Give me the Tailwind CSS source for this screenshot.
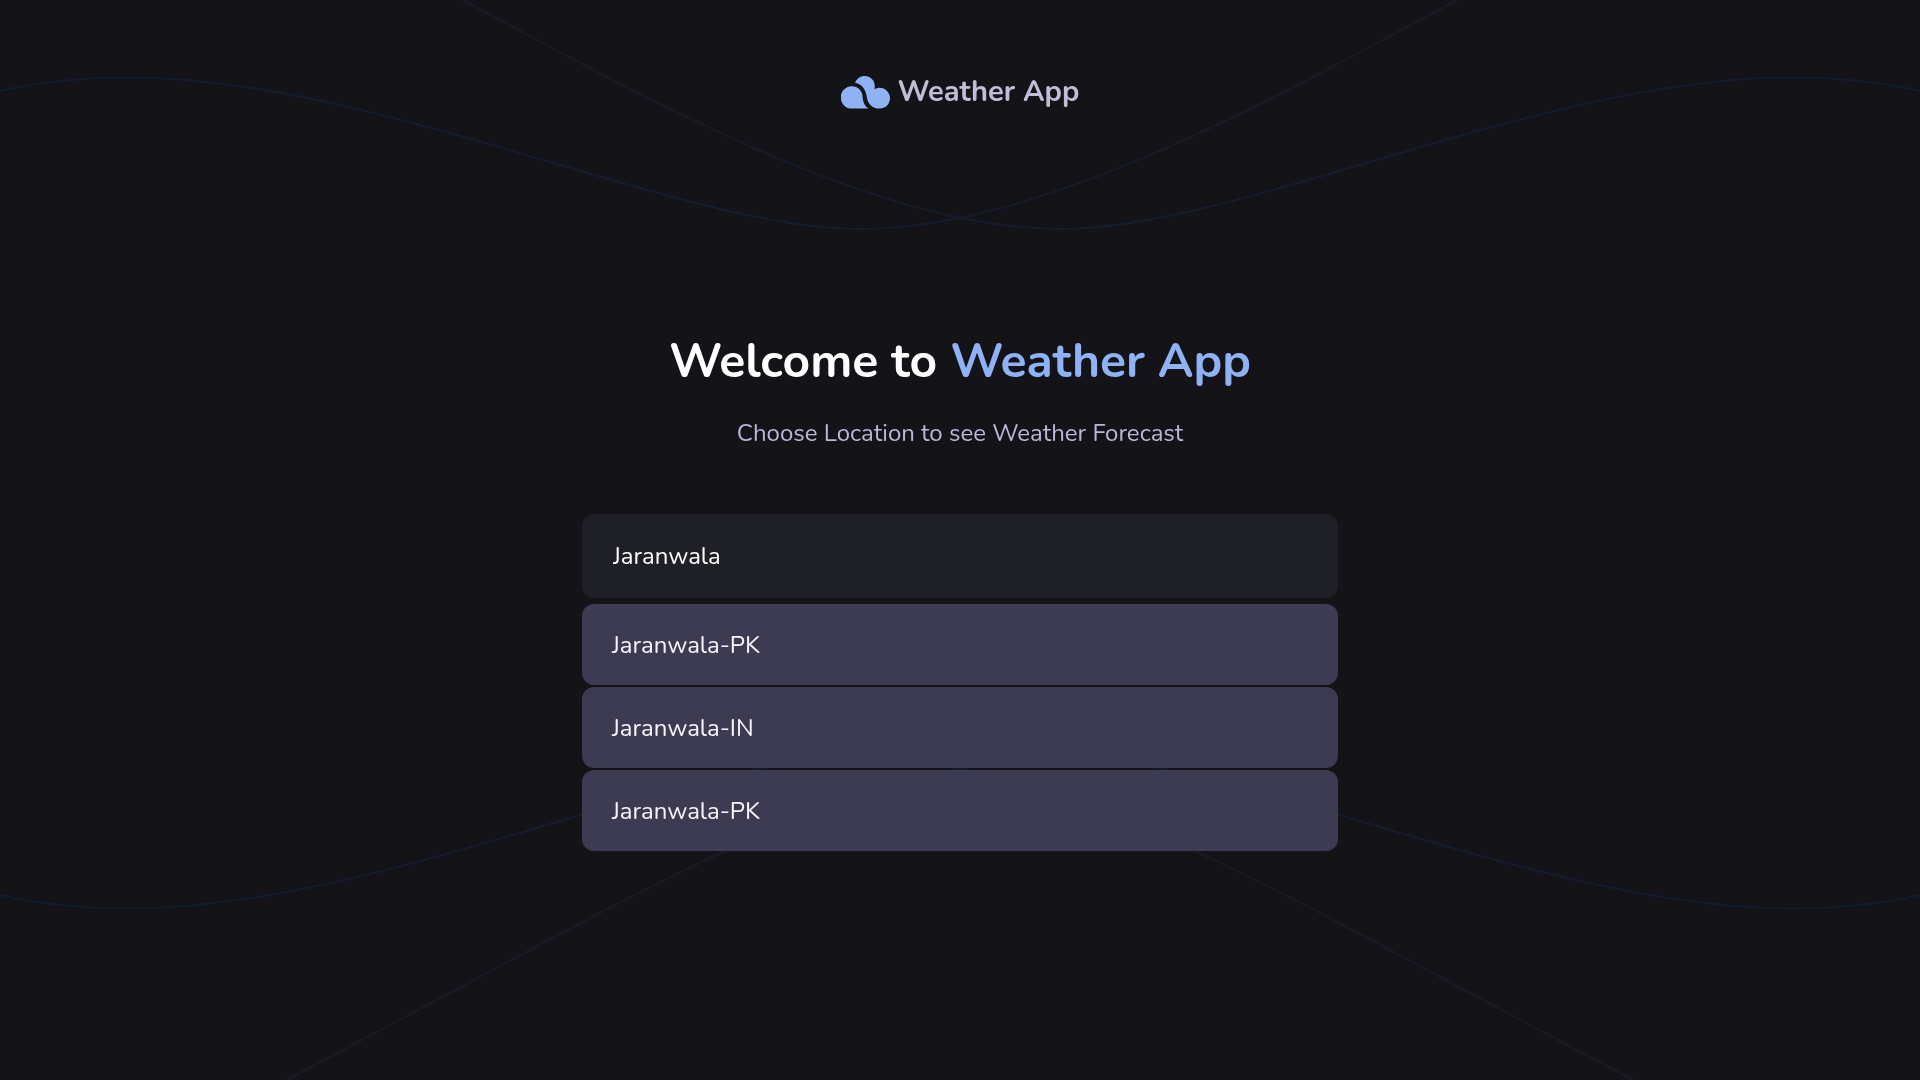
<!DOCTYPE html>
<html lang="en">
<head>
<meta charset="utf-8">
<meta name="viewport" content="width=device-width, initial-scale=1">
<title>Weather App</title>
<script src="https://cdn.jsdelivr.net/npm/@tailwindcss/browser@4"></script>
</head>
<body class="min-h-screen bg-[#131318] font-['Nunito','Lato',sans-serif] text-white">
<!-- Decorative waves: one curve, mirrored on both axes -->
<svg class="pointer-events-none fixed inset-0 -z-10 h-full w-full" viewBox="0 0 1920 1080" preserveAspectRatio="xMidYMid slice" fill="none" aria-hidden="true">
  <defs>
    <linearGradient id="fade" gradientUnits="userSpaceOnUse" x1="0" y1="0" x2="1640" y2="0">
      <stop offset="0" stop-color="#131c30"/>
      <stop offset="0.5" stop-color="#161d2d"/>
      <stop offset="1" stop-color="#191c26"/>
    </linearGradient>
    <path id="wave" stroke="url(#fade)" stroke-width="2" d="M0 91C40 82 85 77.5 128 77.5C378 77.5 680 229 860 229C1035 229 1250 112 1457 0L1633 -94"/>
  </defs>
  <use href="#wave"/>
  <use href="#wave" transform="translate(1920 0) scale(-1 1)"/>
  <use href="#wave" transform="translate(0 986) scale(1 -1)"/>
  <use href="#wave" transform="translate(1920 986) scale(-1 -1)"/>
</svg>

<header class="flex justify-center pt-18">
  <a href="#" class="flex items-center gap-2 text-[29px] leading-10 font-bold text-[#c0bdd6]">
    <svg class="h-[33px] w-[49px]" viewBox="0 0 49 33" fill="#8fb2f5" aria-hidden="true">
      <path d="M10.8 10.2C17 10.2 21.3 14.6 21.6 20.4C21.9 26 23.6 29.8 27.6 32.6H11A11.2 11.2 0 0 1 10.8 10.2Z"/>
      <path d="M14 6.8C16 2.5 19.4 0 23.6 0C29.4 0 33.8 4.4 33.8 10C33.8 11.2 33.7 12.2 33.4 13.2A10.4 10.4 0 1 1 38.4 32.6C31.5 32.6 27 28.2 26 22C25 14.5 22 8.5 14 6.8Z"/>
    </svg>
    <span>Weather App</span>
  </a>
</header>

<main class="mx-auto flex w-full max-w-[756px] flex-col pt-[217px]">
  <h1 class="text-center text-5xl leading-16 font-bold">Welcome to <span class="text-[#8fb2f5]">Weather App</span></h1>
  <p class="mt-6 text-center text-2xl text-[#b9b8d6]">Choose Location to see Weather Forecast</p>
  <form class="mt-[65px]">
    <input type="text" aria-label="Location" value="Jaranwala" autocomplete="off" class="block h-21 w-full rounded-xl bg-[#1f1f28] px-[31px] text-2xl text-white outline-none">
    <ul class="mt-1.5 flex flex-col gap-0.5">
      <li class="flex"><button type="button" class="h-[81px] w-full rounded-xl bg-[#3c3b52] px-[30px] text-left text-2xl text-[#f7f6fc]">Jaranwala-PK</button></li>
      <li class="flex"><button type="button" class="h-[81px] w-full rounded-xl bg-[#3c3b52] px-[30px] text-left text-2xl text-[#f7f6fc]">Jaranwala-IN</button></li>
      <li class="flex"><button type="button" class="h-[81px] w-full rounded-xl bg-[#3c3b52] px-[30px] text-left text-2xl text-[#f7f6fc]">Jaranwala-PK</button></li>
    </ul>
  </form>
</main>
</body>
</html>
